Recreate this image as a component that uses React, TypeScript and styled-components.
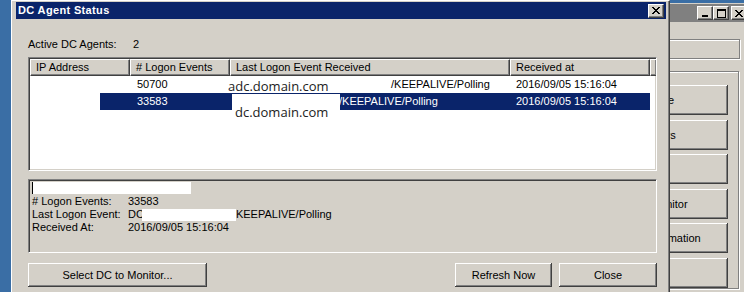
import React from "react";
import styled, { createGlobalStyle } from "styled-components";

const GlobalStyle = createGlobalStyle`
  html, body { margin: 0; padding: 0; }
  body {
    background: #3a6ea5;
    font-family: "Liberation Sans", Arial, sans-serif;
    font-size: 11px;
    color: #000;
  }
  * { box-sizing: border-box; }
`;

const Screen = styled.div`
  position: relative;
  width: 744px;
  height: 292px;
  overflow: hidden;
  background: #3a6ea5;
`;

/* ---------- background window (behind dialog) ---------- */

const BgWindow = styled.div`
  position: absolute;
  left: 420px;
  top: 3px;
  width: 332px;
  height: 320px;
  background: #d4d0c8;
  border-top: 1px solid #d4d0c8;
  border-left: 1px solid #fff;
  padding: 0 3px 0 3px;
  display: flex;
  flex-direction: column;
`;

const BgTitleBar = styled.div`
  height: 18px;
  background: #808080;
  display: flex;
  align-items: center;
  justify-content: flex-end;
  padding-right: 2px;
`;

const CaptionButton = styled.div<{ $gapLeft?: number }>`
  width: 16px;
  height: 14px;
  margin-left: ${(p) => p.$gapLeft ?? 0}px;
  background: #d4d0c8;
  border-top: 1px solid #fff;
  border-left: 1px solid #fff;
  border-right: 1px solid #404040;
  border-bottom: 1px solid #404040;
  box-shadow: inset -1px -1px 0 #808080;
  display: flex;
  align-items: center;
  justify-content: center;
  flex: none;
`;

const BgBody = styled.div`
  display: flex;
  flex-direction: column;
  padding: 17px 9px 0 0;
`;

const EtchedBox = styled.div`
  height: 20px;
  border: 1px solid #808080;
  box-shadow: inset 1px 1px 0 #fff, 1px 1px 0 #fff;
`;

const GroupBox = styled.div`
  margin-top: 12px;
  margin-right: 1px;
  border: 1px solid #808080;
  box-shadow: inset 1px 1px 0 #fff, 1px 1px 0 #fff;
  padding: 13px 10px 0 0;
  display: flex;
  flex-direction: column;
  align-items: flex-end;
  gap: 4.5px;
`;

const BgButton = styled.div`
  width: 164px;
  height: 30px;
  background: #d4d0c8;
  box-shadow: inset -1px -1px 0 #404040, inset 1px 1px 0 #fff,
    inset -2px -2px 0 #808080;
  display: flex;
  align-items: center;
  justify-content: center;
  white-space: nowrap;
`;

/* ---------- dialog ---------- */

const Dialog = styled.div`
  position: absolute;
  left: 11px;
  top: 0;
  width: 659px;
  height: 320px;
  background: #d4d0c8;
  border-top: 1px solid #fff;
  border-left: 1px solid #fff;
  border-right: 1px solid #404040;
  box-shadow: inset -1px 0 0 #808080;
  padding: 1px 3px 0 4px;
  display: flex;
  flex-direction: column;
`;

const TitleBar = styled.div`
  height: 17px;
  background: #0a246a;
  display: flex;
  align-items: center;
  justify-content: space-between;
  padding: 0 2px 0 2px;
`;

const TitleText = styled.span`
  color: #fff;
  font-weight: bold;
  font-size: 11px;
  letter-spacing: 0.35px;
  line-height: 17px;
`;

const Body = styled.div`
  display: flex;
  flex-direction: column;
  padding: 19px 9px 0 12px;
`;

const AgentsRow = styled.div`
  display: grid;
  grid-template-columns: 105px auto;
  height: 13px;
  line-height: 13px;
`;

const ListView = styled.div`
  margin-top: 6px;
  height: 114px;
  background: #fff;
  border-top: 1px solid #808080;
  border-left: 1px solid #808080;
  border-right: 1px solid #fff;
  border-bottom: 1px solid #fff;
  box-shadow: inset 1px 1px 0 #404040, inset -1px -1px 0 #d4d0c8;
  padding: 1px;
  display: flex;
  flex-direction: column;
  overflow: hidden;
`;

const columns = "100px 100px 280px 140px";

const Header = styled.div`
  display: grid;
  grid-template-columns: ${columns} 1fr;
  height: 17px;
  flex: none;
`;

const HeaderCell = styled.div`
  background: #d4d0c8;
  border-top: 1px solid #fff;
  border-left: 1px solid #fff;
  border-right: 1px solid #404040;
  border-bottom: 1px solid #404040;
  box-shadow: inset -1px -1px 0 #808080;
  padding-left: 5px;
  line-height: 15px;
  white-space: nowrap;
  overflow: hidden;
`;

const Rows = styled.div`
  position: relative;
  flex: 1;
`;

const Row = styled.div<{ $selected?: boolean }>`
  display: grid;
  grid-template-columns: ${columns};
  width: 620px;
  height: 17px;
  line-height: 17px;
  background: ${(p) => (p.$selected ? "#0a246a" : "transparent")};
  color: ${(p) => (p.$selected ? "#fff" : "#000")};
`;

const Cell = styled.div<{ $indent?: number }>`
  padding-left: ${(p) => p.$indent ?? 6}px;
  white-space: nowrap;
  overflow: hidden;
`;

const Redaction = styled.div<{
  $left: number;
  $top: number;
  $w: number;
  $h: number;
  $clear?: boolean;
}>`
  position: absolute;
  left: ${(p) => p.$left}px;
  top: ${(p) => p.$top}px;
  width: ${(p) => p.$w}px;
  height: ${(p) => p.$h}px;
  background: ${(p) => (p.$clear ? "transparent" : "#fff")};
  font-family: "Open Sans", "Liberation Sans", sans-serif;
  font-size: 13px;
  line-height: 16px;
  color: #222;
  white-space: nowrap;
`;

const RedactionText = styled.span<{ $dx: number; $dy: number }>`
  display: block;
  padding-left: ${(p) => p.$dx}px;
  padding-top: ${(p) => p.$dy}px;
`;

const Detail = styled.div`
  margin-top: 8px;
  height: 74px;
  border-top: 1px solid #808080;
  border-left: 1px solid #808080;
  border-right: 1px solid #fff;
  border-bottom: 1px solid #fff;
  box-shadow: inset 1px 1px 0 #404040;
  padding: 2px 0 0 3px;
  display: flex;
  flex-direction: column;
`;

const CursorLine = styled.div`
  width: 159px;
  height: 12px;
  background: #fff;
  border-left: 1px solid #000;
  margin-bottom: 1px;
`;

const DetailRow = styled.div`
  display: grid;
  grid-template-columns: 96px auto;
  height: 13px;
  line-height: 13px;
  white-space: nowrap;
`;

const DetailValue = styled.div`
  display: flex;
  align-items: center;
`;

const InlineMask = styled.span`
  display: inline-block;
  width: 94px;
  height: 12px;
  margin-left: -2px;
  background: #fff;
`;

const ButtonRow = styled.div`
  display: flex;
  margin-top: 10px;
  gap: 7px;
`;

const Button = styled.button<{ $w: number; $push?: boolean }>`
  width: ${(p) => p.$w}px;
  height: 24px;
  margin-left: ${(p) => (p.$push ? "auto" : "0")};
  padding: 0;
  border: none;
  background: #d4d0c8;
  color: #000;
  font-family: "Liberation Sans", Arial, sans-serif;
  font-size: 11px;
  box-shadow: inset -1px -1px 0 #404040, inset 1px 1px 0 #fff,
    inset -2px -2px 0 #808080;
`;

/* ---------- glyphs ---------- */

const CloseGlyph = () => {
  const rows = [
    [0, 1, 6, 7],
    [1, 2, 5, 6],
    [2, 3, 4, 5],
    [3, 4],
    [2, 3, 4, 5],
    [1, 2, 5, 6],
    [0, 1, 6, 7],
  ];
  return (
    <svg width="8" height="7" viewBox="0 0 8 7" shapeRendering="crispEdges">
      {rows.map((cols, y) =>
        cols.map((x) => <rect key={`${x}-${y}`} x={x} y={y} width="1" height="1" fill="#000" />)
      )}
    </svg>
  );
};

const MinGlyph = () => (
  <svg width="8" height="9" viewBox="0 0 8 9" shapeRendering="crispEdges">
    <rect x="1" y="6" width="6" height="2" fill="#000" />
  </svg>
);

const MaxGlyph = () => (
  <svg width="9" height="9" viewBox="0 0 9 9" shapeRendering="crispEdges">
    <rect x="0.5" y="0.5" width="8" height="8" fill="none" stroke="#000" strokeWidth="1" />
    <rect x="0" y="0" width="9" height="2" fill="#000" />
  </svg>
);

export default function App() {
  return (
    <>
      <GlobalStyle />
      <Screen>
        <BgWindow>
          <BgTitleBar>
            <CaptionButton>
              <MinGlyph />
            </CaptionButton>
            <CaptionButton>
              <MaxGlyph />
            </CaptionButton>
            <CaptionButton $gapLeft={2}>
              <CloseGlyph />
            </CaptionButton>
          </BgTitleBar>
          <BgBody>
            <EtchedBox />
            <GroupBox>
              <BgButton>Set Service</BgButton>
              <BgButton>Show Users</BgButton>
              <BgButton>Users</BgButton>
              <BgButton>Domains Monitor</BgButton>
              <BgButton>Diagnostic Information</BgButton>
              <BgButton>Help</BgButton>
            </GroupBox>
          </BgBody>
        </BgWindow>

        <Dialog>
          <TitleBar>
            <TitleText>DC Agent Status</TitleText>
            <CaptionButton>
              <CloseGlyph />
            </CaptionButton>
          </TitleBar>
          <Body>
            <AgentsRow>
              <span>Active DC Agents:</span>
              <span>2</span>
            </AgentsRow>

            <ListView>
              <Header>
                <HeaderCell>IP Address</HeaderCell>
                <HeaderCell># Logon Events</HeaderCell>
                <HeaderCell>Last Logon Event Received</HeaderCell>
                <HeaderCell>Received at</HeaderCell>
                <HeaderCell />
              </Header>
              <Rows>
                <Row>
                  <Cell />
                  <Cell $indent={7}>50700</Cell>
                  <Cell $indent={161}>/KEEPALIVE/Polling</Cell>
                  <Cell>2016/09/05 15:16:04</Cell>
                </Row>
                <Row $selected>
                  <Cell />
                  <Cell $indent={7}>33583</Cell>
                  <Cell $indent={109}>/KEEPALIVE/Polling</Cell>
                  <Cell>2016/09/05 15:16:04</Cell>
                </Row>
                <Redaction $left={198} $top={2} $w={140} $h={15} $clear>
                  <RedactionText $dx={0} $dy={0}>adc.domain.com</RedactionText>
                </Redaction>
                <Redaction $left={0} $top={17} $w={70} $h={17} />
                <Redaction $left={202} $top={18} $w={108} $h={30}>
                  <RedactionText $dx={3} $dy={10}>dc.domain.com</RedactionText>
                </Redaction>
              </Rows>
            </ListView>

            <Detail>
              <CursorLine />
              <DetailRow>
                <span># Logon Events:</span>
                <span>33583</span>
              </DetailRow>
              <DetailRow>
                <span>Last Logon Event:</span>
                <DetailValue>
                  DC
                  <InlineMask />
                  KEEPALIVE/Polling
                </DetailValue>
              </DetailRow>
              <DetailRow>
                <span>Received At:</span>
                <span>2016/09/05 15:16:04</span>
              </DetailRow>
            </Detail>

            <ButtonRow>
              <Button $w={179}>Select DC to Monitor...</Button>
              <Button $w={97} $push>
                Refresh Now
              </Button>
              <Button $w={98}>Close</Button>
            </ButtonRow>
          </Body>
        </Dialog>
      </Screen>
    </>
  );
}
